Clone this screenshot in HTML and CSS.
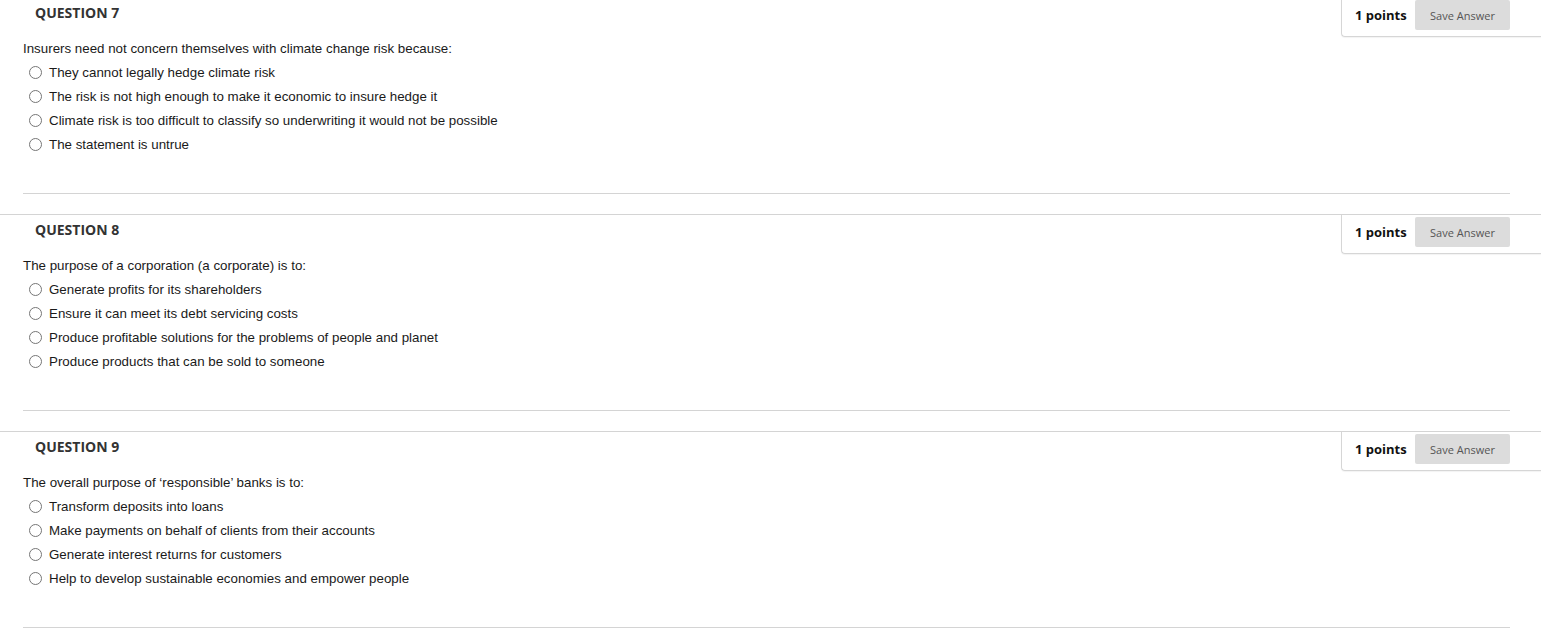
FILE: index.html
```html
<!DOCTYPE html>
<html lang="en">
<head>
<meta charset="utf-8">
<title>Questions</title>
<link rel="stylesheet" href="styles.css">
</head>
<body>
<div class="page">
  <section class="question first">
    <div class="q-head">
      <h3 class="q-title">QUESTION 7</h3>
      <div class="points-box">
        <span class="points">1 points</span>
        <button class="save">Save Answer</button>
      </div>
    </div>
    <div class="q-body">
      <p class="q-text">Insurers need not concern themselves with climate change risk because:</p>
      <ul class="options">
        <li><span class="radio"></span>They cannot legally hedge climate risk</li>
        <li><span class="radio"></span>The risk is not high enough to make it economic to insure hedge it</li>
        <li><span class="radio"></span>Climate risk is too difficult to classify so underwriting it would not be possible</li>
        <li><span class="radio"></span>The statement is untrue</li>
      </ul>
    </div>
  </section>
  <section class="question">
    <div class="q-head">
      <h3 class="q-title">QUESTION 8</h3>
      <div class="points-box">
        <span class="points">1 points</span>
        <button class="save">Save Answer</button>
      </div>
    </div>
    <div class="q-body">
      <p class="q-text">The purpose of a corporation (a corporate) is to:</p>
      <ul class="options">
        <li><span class="radio"></span>Generate profits for its shareholders</li>
        <li><span class="radio"></span>Ensure it can meet its debt servicing costs</li>
        <li><span class="radio"></span>Produce profitable solutions for the problems of people and planet</li>
        <li><span class="radio"></span>Produce products that can be sold to someone</li>
      </ul>
    </div>
  </section>
  <section class="question">
    <div class="q-head">
      <h3 class="q-title">QUESTION 9</h3>
      <div class="points-box">
        <span class="points">1 points</span>
        <button class="save">Save Answer</button>
      </div>
    </div>
    <div class="q-body">
      <p class="q-text">The overall purpose of ‘responsible’ banks is to:</p>
      <ul class="options">
        <li><span class="radio"></span>Transform deposits into loans</li>
        <li><span class="radio"></span>Make payments on behalf of clients from their accounts</li>
        <li><span class="radio"></span>Generate interest returns for customers</li>
        <li><span class="radio"></span>Help to develop sustainable economies and empower people</li>
      </ul>
    </div>
  </section>
</div>
</body>
</html>
```

FILE: styles.css
```css
* { box-sizing: border-box; }
html, body { margin: 0; padding: 0; background: #fff; }
body {
  font-family: "Liberation Sans", Arial, sans-serif;
  font-size: 13.33px;
  color: #1a1a1a;
  overflow: hidden;
}
.page { margin-top: -3px; }
.question {
  border-top: 1px solid #d4d4d4;
  margin-bottom: 20px;
}
.q-head {
  display: flex;
  justify-content: space-between;
  align-items: flex-start;
}
.q-title {
  margin: 0;
  padding: 5px 0 0 35px;
  font-family: "Open Sans", sans-serif;
  font-weight: 700;
  font-size: 14px;
  line-height: 19px;
  color: #333;
}
.points-box {
  display: flex;
  align-items: center;
  width: 200px;
  height: 39px;
  padding: 2px 31px 6px 13px;
  border-left: 1px solid #d6d6d6;
  border-bottom: 1px solid #d6d6d6;
  border-bottom-left-radius: 4px;
  box-shadow: 0 1px 1px rgba(0,0,0,0.05);
}
.points {
  font-family: "Open Sans", sans-serif;
  font-weight: 700;
  font-size: 13px;
  color: #111;
  white-space: nowrap;
  flex: 1;
}
.save {
  width: 95px;
  height: 30px;
  border: none;
  border-radius: 2px;
  background: #dcdcdc;
  font-family: "Open Sans", sans-serif;
  font-size: 11px;
  color: #555;
  padding: 0;
}
.q-body {
  margin: 0 31px 0 23px;
  padding-bottom: 37px;
  border-bottom: 1px solid #d4d4d4;
}
.q-text {
  margin: 3px 0 0;
  line-height: 18px;
}
.options {
  list-style: none;
  margin: 2px 0 0;
  padding: 0;
}
.options li {
  display: flex;
  align-items: center;
  height: 24px;
}
.radio {
  width: 13px;
  height: 13px;
  border: 1px solid #767676;
  border-radius: 50%;
  margin: 0 7px 0 6px;
  background: #fff;
  flex: none;
}
```
